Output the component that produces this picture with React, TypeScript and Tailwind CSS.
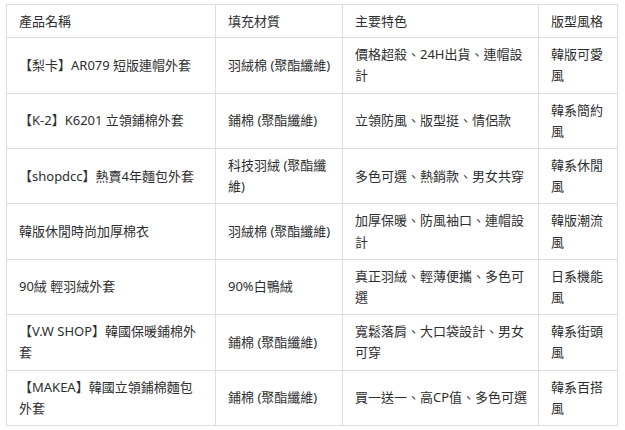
// each cell is a list of lines, broken where the reference breaks them
const rows: string[][][] = [
  [["【梨卡】AR079 短版連帽外套"], ["羽絨棉 (聚酯纖維)"], ["價格超殺、24H出貨、連帽設", "計"], ["韓版可愛", "風"]],
  [["【K-2】K6201 立領鋪棉外套"], ["鋪棉 (聚酯纖維)"], ["立領防風、版型挺、情侶款"], ["韓系簡約", "風"]],
  [["【shopdcc】熱賣4年麵包外套"], ["科技羽絨 (聚酯纖", "維)"], ["多色可選、熱銷款、男女共穿"], ["韓系休閒", "風"]],
  [["韓版休閒時尚加厚棉衣"], ["羽絨棉 (聚酯纖維)"], ["加厚保暖、防風袖口、連帽設", "計"], ["韓版潮流", "風"]],
  [["90絨 輕羽絨外套"], ["90%白鴨絨"], ["真正羽絨、輕薄便攜、多色可", "選"], ["日系機能", "風"]],
  [["【V.W SHOP】韓國保暖鋪棉外", "套"], ["鋪棉 (聚酯纖維)"], ["寬鬆落肩、大口袋設計、男女", "可穿"], ["韓系街頭", "風"]],
  [["【MAKEA】韓國立領鋪棉麵包", "外套"], ["鋪棉 (聚酯纖維)"], ["買一送一、高CP值、多色可選"], ["韓系百搭", "風"]],
]

const headers = ["產品名稱", "填充材質", "主要特色", "版型風格"]

function Lines({ lines }: { lines: string[] }) {
  return (
    <>
      {lines.map((l, i) => (
        <span key={i} className="block whitespace-nowrap">
          {l}
        </span>
      ))}
    </>
  )
}

export default function App() {
  return (
    <div className="min-h-screen bg-white pl-[6px] pt-[4px] font-['Noto_Sans','Noto_Sans_CJK_TC',sans-serif] text-[13px] leading-[21.2px] text-[#2e2e2e]">
      <table className="w-[611px] table-fixed border-collapse">
        <colgroup>
          <col className="w-[209px]" />
          <col className="w-[127px]" />
          <col className="w-[196px]" />
          <col className="w-[79px]" />
        </colgroup>
        <thead>
          <tr>
            {headers.map((h) => (
              <th key={h} className="border border-[#dcdcdc] px-3 pt-[6px] pb-[5px] text-left align-middle font-normal">
                {h}
              </th>
            ))}
          </tr>
        </thead>
        <tbody>
          {rows.map((r, ri) => (
            <tr key={ri}>
              {r.map((c, i) => (
                <td key={i} className="border border-[#dcdcdc] px-3 py-[6px] align-middle">
                  <Lines lines={c} />
                </td>
              ))}
            </tr>
          ))}
        </tbody>
      </table>
    </div>
  )
}
